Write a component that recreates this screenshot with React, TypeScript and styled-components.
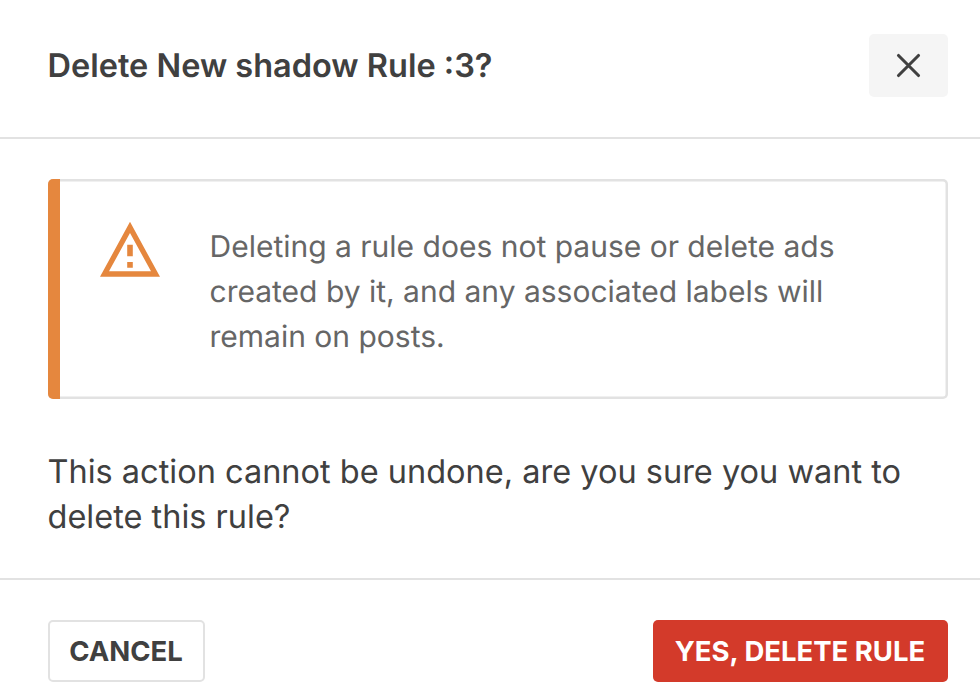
import React from "react";
import styled, { createGlobalStyle } from "styled-components";

const GlobalStyle = createGlobalStyle`
  * { box-sizing: border-box; }
  body { margin: 0; background: #fff; color: #404040; font-family: Inter, sans-serif; overflow: hidden; -webkit-font-smoothing: antialiased; text-rendering: geometricPrecision; }
  h1, p { margin: 0; }
  button { font-family: inherit; cursor: pointer; }
`;
const Dialog = styled.section`
  width: 980px;
  height: 693px;
  display: flex;
  flex-direction: column;
  background: #fff;
`;
const Header = styled.header`
  display: flex;
  justify-content: space-between;
  align-items: flex-start;
  height: 139px;
  padding: 34px 32px 0 48px;
  border-bottom: 2px solid #e2e2e2;
`;
const Title = styled.h1`
  margin-left: -0.5px;
  font-size: 32.5px;
  line-height: 63px;
  font-weight: 600;
  white-space: nowrap;
`;
const CloseButton = styled.button`
  display: grid;
  place-items: center;
  width: 79px;
  height: 63px;
  padding: 0;
  border: 0;
  border-radius: 5px;
  background: #f5f5f5;
  color: #404040;
`;
const Content = styled.div`
  height: 441px;
  padding: 40px 32px 0 48px;
  border-bottom: 2px solid #e2e2e2;
`;
const Notice = styled.div`
  display: flex;
  align-items: flex-start;
  height: 220px;
  overflow: hidden;
  border-radius: 5px;
  box-shadow: inset 0 0 0 2.5px #e2e2e2;
`;
const Accent = styled.div`
  flex: 0 0 12px;
  align-self: stretch;
  background: #e5873e;
`;
const WarningIcon = styled.svg`
  flex: none;
  margin: 42px 49.5px 0 40px;
`;
const NoticeText = styled.p`
  margin-top: 46px;
  font-size: 30px;
  line-height: 45px;
  color: #666;
  white-space: nowrap;
`;
const Question = styled.p`
  margin: 50px 0 0 -0.5px;
  font-size: 32.5px;
  line-height: 45px;
  white-space: nowrap;
`;
const Footer = styled.footer`
  display: flex;
  justify-content: space-between;
  padding: 40px 32px 0 48px;
`;
const ActionButton = styled.button<{ $danger?: boolean }>`
  width: ${(p) => (p.$danger ? 295 : 157)}px;
  height: 62px;
  padding: 0 1px 0 0;
  border: ${(p) => (p.$danger ? "0" : "2px solid #e2e2e2")};
  border-radius: 5px;
  background: ${(p) => (p.$danger ? "#d33a2a" : "#fff")};
  color: ${(p) => (p.$danger ? "#fff" : "#404040")};
  font-size: 27.5px;
  font-weight: 700;
  white-space: nowrap;
`;

export default function App() {
  return (
    <>
      <GlobalStyle />
      <Dialog role="dialog" aria-labelledby="title">
        <Header>
          <Title id="title">Delete New shadow Rule :3?</Title>
          <CloseButton aria-label="Close">
            <svg width="25" height="25" viewBox="0 0 25 25" fill="none" stroke="currentColor" strokeWidth="3.1" strokeLinecap="round">
              <path d="M2.5 2.5 22.5 22.5M22.5 2.5 2.5 22.5" />
            </svg>
          </CloseButton>
        </Header>
        <Content>
          <Notice>
            <Accent />
            <WarningIcon width="60" height="56" viewBox="0 0 60 56" fill="none">
              <path d="M30 .8 60 55.8H0ZM30 12 9 50.3H51Z" fill="#e5873e" fillRule="evenodd" />
              <path d="M27.2 23.8h5.6v11.5h-5.6zM27.2 41h5.6v5.8h-5.6z" fill="#e5873e" />
            </WarningIcon>
            <NoticeText>
              Deleting a rule does not pause or delete ads<br />
              created by it, and any associated labels will<br />
              remain on posts.
            </NoticeText>
          </Notice>
          <Question>
            This action cannot be undone, are you sure you want to<br />
            delete this rule?
          </Question>
        </Content>
        <Footer>
          <ActionButton>CANCEL</ActionButton>
          <ActionButton $danger>YES, DELETE RULE</ActionButton>
        </Footer>
      </Dialog>
    </>
  );
}
